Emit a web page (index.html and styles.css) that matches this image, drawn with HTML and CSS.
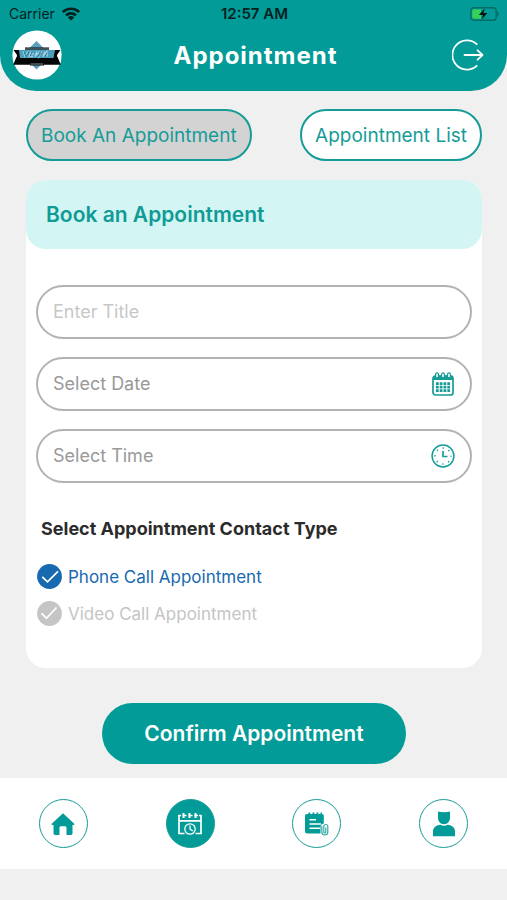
FILE: index.html
```html
<!DOCTYPE html>
<html lang="en">
<head>
<meta charset="utf-8">
<meta name="viewport" content="width=device-width, initial-scale=1">
<title>Appointment</title>
<link rel="stylesheet" href="styles.css">
</head>
<body>
<header class="header">
  <div class="status">
    <div class="status-side">
      <span>Carrier</span>
      <svg width="20" height="14" viewBox="0 0 20 14" aria-hidden="true"><g fill="none" stroke="#03211f" stroke-width="2.6"><path d="M1.8 5.2a11.6 11.6 0 0 1 16.4 0"/><path d="M5 8.4a7.1 7.1 0 0 1 10 0"/></g><path d="M10 13.6 6.8 10.4a4.5 4.5 0 0 1 6.4 0Z" fill="#03211f"/></svg>
    </div>
    <span class="status-time">12:57 AM</span>
    <div class="status-side status-end">
      <svg width="30" height="14" viewBox="0 0 30 14" aria-hidden="true"><rect x=".8" y=".8" width="25.4" height="12.4" rx="3" fill="none" stroke="#056b66" stroke-width="1.4"/><path d="M4 2.2h7v9.6H4a1.8 1.8 0 0 1-1.8-1.8V4A1.8 1.8 0 0 1 4 2.2Z" fill="#35d158"/><path d="M27.4 4.6c2 .8 2 4 0 4.8Z" fill="#056b66"/><path d="M14.6 1.6 8.800 8h4.1l-1.2 4.5L17.4 6h-4Z" fill="#061513"/></svg>
    </div>
  </div>
  <div class="titlebar">
    <svg class="logo" width="50" height="50" viewBox="0 0 50 50" role="img" aria-label="Logo"><circle cx="25" cy="25" r="24.6" fill="#fff"/><path d="m24.500 11 14 14-14 14.500-14-14.500Z" fill="#5b9fc0"/><path d="M13 17.500h24V20h11.500l-3.500 5 3.700 9.800H32v.700H18v-.700H1.300L5 25l-3.500-5H13Z" fill="#060707"/><path d="M7 20h36l-1.500 8H8Z" fill="#4b9fbd"/><path d="M13 18.300h24v1.400H13Z" fill="#58717b"/><path d="m11 21.500 2 5 3-5m3 0-2 5h4m-3-2.500h4m3-2.500-2 5 4-4v4l3-5m3 0-2 5 4-5v5" fill="none" stroke="#9fd0e2" stroke-width="1.400"/><path d="m12 22 2 4.500 3-4.500m3 0-2 4.500m10-4.500-2 4.500 4-4m5 0-2 4" fill="none" stroke="#1d6784" stroke-width=".8"/><path d="M1 21.500 5 26 1 33.500Zm48 0L45 26l4 7.500Z" fill="#fff"/><path d="M18.500 34h12.500" stroke="#b9cdd3" stroke-width=".7"/></svg>
    <h1 class="title">Appointment</h1>
    <button class="icon-button logout" type="button" aria-label="Log out"><svg width="32" height="32" viewBox="0 0 32 32" fill="none" stroke="#fff" stroke-width="1.800" stroke-linecap="round" stroke-linejoin="round"><path d="M24.700 5.100A14.600 14.600 0 1 0 24.700 26.900"/><path d="M12.500 16h17.700M25.600 11.300l4.900 4.700-4.900 4.700"/></svg></button>
  </div>
</header>

<main class="content">
  <div class="tabs">
    <button class="tab tab-active" type="button">Book An Appointment</button>
    <button class="tab" type="button">Appointment List</button>
  </div>
  <form class="form">
    <section class="card">
      <h2 class="card-title">Book an Appointment</h2>
      <div class="fields">
        <div class="field"><input class="input" type="text" placeholder="Enter Title" aria-label="Title"></div>
        <div class="field">
          <input class="input picker" type="text" placeholder="Select Date" aria-label="Date">
          <button class="icon-button" type="button" aria-label="Open calendar"><svg width="24" height="24" viewBox="0 0 24 24"><rect x="2" y="4" width="20" height="19" rx="2.500" fill="#fff" stroke="#169c97" stroke-width="1.700"/><path d="M2 8V5.500A2 2 0 0 1 4 3.500h16a2 2 0 0 1 2 2V8Z" fill="#169c97"/><g fill="#fff" stroke="#169c97" stroke-width="1.200"><rect x="4.600" y=".8" width="2.800" height="5" rx="1.400"/><rect x="10.600" y=".8" width="2.800" height="5" rx="1.400"/><rect x="16.600" y=".8" width="2.800" height="5" rx="1.400"/></g><path d="M4.900 11.700h14.200M4.900 15.200h14.200M4.900 18.700h14.200" stroke="#169c97" stroke-width="2.700" stroke-dasharray="2.800 1"/></svg></button>
        </div>
        <div class="field">
          <input class="input picker" type="text" placeholder="Select Time" aria-label="Time">
          <button class="icon-button" type="button" aria-label="Open clock"><svg width="24" height="24" viewBox="0 0 24 24" fill="none" stroke="#169c97"><circle cx="12" cy="12" r="10.900" stroke-width="1.500"/><circle cx="12" cy="12" r="8" stroke-width="1.700" stroke-dasharray="1.200 5.083" stroke-dashoffset=".6"/><path d="M12 7v5.500h4.500" stroke-width="1.700"/></svg></button>
        </div>
      </div>
      <fieldset class="contact">
        <legend class="legend">Select Appointment Contact Type</legend>
        <label class="option"><input class="radio" type="radio" name="contact" checked><svg class="check" width="25" height="25" viewBox="0 0 25 25" aria-hidden="true"><circle cx="12.500" cy="12.500" r="12.400" fill="currentColor"/><path d="m5.300 12.800 5.200 5L21 7.300" fill="none" stroke="#fff" stroke-width="1.800"/></svg><span>Phone Call Appointment</span></label>
        <label class="option"><input class="radio" type="radio" name="contact"><svg class="check" width="25" height="25" viewBox="0 0 25 25" aria-hidden="true"><circle cx="12.500" cy="12.500" r="12.400" fill="currentColor"/><path d="m4.500 12.300 5 5L19.500 6.500" fill="none" stroke="#fff" stroke-width="1.800"/></svg><span>Video Call Appointment</span></label>
      </fieldset>
    </section>
    <button class="confirm" type="submit">Confirm Appointment</button>
  </form>
</main>

<nav class="nav" aria-label="Main">
  <a class="nav-link" href="#home" aria-label="Home"><svg width="24" height="24" viewBox="0 0 24 24"><path d="M12 1.200 23 11.500c.8.900.3 1.500-.6 1.500H21.500v8.300c0 1-.7 1.600-1.600 1.600H15.500v-7.200c0-1-.6-1.500-1.500-1.500h-4c-.9 0-1.500.5-1.500 1.500v7.200H4.100c-.9 0-1.600-.6-1.600-1.600V13H1.600c-.9 0-1.400-.6-.6-1.500Z" fill="#029b97"/></svg></a>
  <a class="nav-link nav-active" href="#appointments" aria-label="Appointments" aria-current="page"><svg width="26" height="26" viewBox="0 0 26 26" fill="none" stroke="#fff"><path d="M7.500 22.500H2V4.500h2M22 4.500h2v18h-5.500M2.500 9.800h21" stroke-width="1.700"/><path d="M5.500 4.500h4m2 0h4m2 0h3.500" stroke-width="1.400"/><path d="M6.500 2v5M12.500 2v5M18.500 2v5" stroke-width="2"/><circle cx="13" cy="18" r="5.200" stroke-width="1.300"/><path d="M13 14.500V18l2.700 2" stroke-width="1.300"/></svg></a>
  <a class="nav-link" href="#records" aria-label="Records"><svg width="26" height="26" viewBox="0 0 26 26"><path d="M3 3h1.500V1.500h1.800V3h2.200V1.500h1.800V3h2.200V1.500h1.800V3h2.200V1.500H18V3c1.200 0 1.800.8 1.800 2v7.500c-2 .5-3.300 1.800-3.300 4V22.500h-13c-1.500 0-2.500-.8-2.500-2.200V5c0-1.200.8-2 2-2Z" fill="#029b97"/><path d="M5.500 8.800h6.500M5.500 13h11.500M5.500 17.200h10.500" stroke="#fff" stroke-width="1.500"/><path d="M17.800 15v6a3 3 0 0 0 6 0v-5.500a2 2 0 0 0-4 0V21a1 1 0 0 0 2 0v-4.500" fill="none" stroke="#35a9a4" stroke-width="1.200"/></svg></a>
  <a class="nav-link" href="#profile" aria-label="Profile"><svg width="26" height="26" viewBox="0 0 26 26"><path d="M7 .6c3.500.7 8.500.7 12 0v6.200c0 3.600-2.500 6.500-6 6.500S7 10.400 7 6.800ZM2 25.200v-4.500c0-4 2.500-6.200 7.500-7 2 1.400 5 1.400 7 0 5 .8 7.500 3 7.500 7v4.500Z" fill="#029b97"/></svg></a>
</nav>
</body>
</html>
```
FILE: styles.css
```css
* { box-sizing: border-box; }

body {
  margin: 0;
  background: #f0f0f0;
  font-family: Inter, "Liberation Sans", sans-serif;
  font-size: 17px;
  line-height: 24px;
}

button, input {
  font: inherit;
  margin: 0;
}

button { cursor: pointer; }

svg { display: block; flex: none; }

h1, h2 { margin: 0; }

.header {
  background: #029b97;
  border-radius: 0 0 36px 36px;
}

.status {
  display: grid;
  grid-template-columns: 1fr auto 1fr;
  align-items: center;
  height: 28px;
  padding: 0 7px 0 9px;
  color: #03211f;
  font-size: 14px;
}

.status-side {
  display: flex;
  align-items: center;
  gap: 6px;
}

.status-end { justify-content: flex-end; }

.status-time {
  font-size: 15px;
  font-weight: 600;
}

.titlebar {
  display: grid;
  grid-template-columns: 1fr auto 1fr;
  align-items: center;
  padding: 2px 8px 11px 12px;
}

.title {
  padding-top: 2px;
  color: #fff;
  font-size: 24px;
  font-weight: 700;
  letter-spacing: 1px;
}

.icon-button {
  padding: 0;
  border: 0;
  background: none;
}

.logout {
  justify-self: end;
  margin-right: 15px;
}

.content { padding: 18px 25px 14px 26px; }

.tabs {
  display: flex;
  justify-content: space-between;
  margin-bottom: 19px;
}

.tab {
  height: 52px;
  padding: 2px 13px 0;
  border: 2px solid #169c97;
  border-radius: 26px;
  background: #fff;
  color: #169c97;
  font-size: 19px;
}

.tab-active { background: #d3d3d3; }

.card {
  padding-bottom: 42px;
  border-radius: 20px;
  background: #fff;
}

.card-title {
  padding: 23px 20px 22px;
  border-radius: 20px;
  background: #d3f5f4;
  color: #109b96;
  font-size: 21px;
  font-weight: 600;
}

.fields {
  display: grid;
  gap: 18px;
  padding: 36px 10px 0;
}

.field {
  display: flex;
  align-items: center;
  height: 54px;
  padding: 0 15px;
  border: 2px solid #b2b2b2;
  border-radius: 27px;
}

.input {
  flex: 1;
  min-width: 0;
  padding: 0;
  border: 0;
  outline: 0;
  background: none;
  color: #333;
  font-size: 18px;
}

.input::placeholder { color: #c7c7c7; opacity: 1; }
.picker::placeholder { color: #999; }

.contact {
  display: grid;
  gap: 12px;
  margin: 0;
  padding: 0 11px;
  border: 0;
}

.legend {
  padding: 34px 4px 23px;
  color: #2b2b2b;
  font-size: 18px;
  font-weight: 700;
}

.option {
  display: flex;
  position: relative;
  align-items: center;
  gap: 6px;
  height: 25px;
  color: #c5c5c5;
}

.option:has(:checked) { color: #1769b0; }

.radio {
  position: absolute;
  width: 25px;
  height: 25px;
  margin: 0;
  opacity: 0;
}

.confirm {
  display: block;
  width: calc(100% * 2 / 3);
  height: 61px;
  margin: 35px auto 0;
  border: 0;
  border-radius: 31px;
  background: #029b97;
  color: #fff;
  font-size: 21px;
  font-weight: 600;
}

.nav {
  display: grid;
  grid-template-columns: repeat(4, 1fr);
  justify-items: center;
  padding: 21px 0;
  background: #fff;
}

.nav-link {
  display: grid;
  place-items: center;
  width: 49px;
  height: 49px;
  border: 1px solid #169c97;
  border-radius: 50%;
}

.nav-active { background: #029b97; }
```
